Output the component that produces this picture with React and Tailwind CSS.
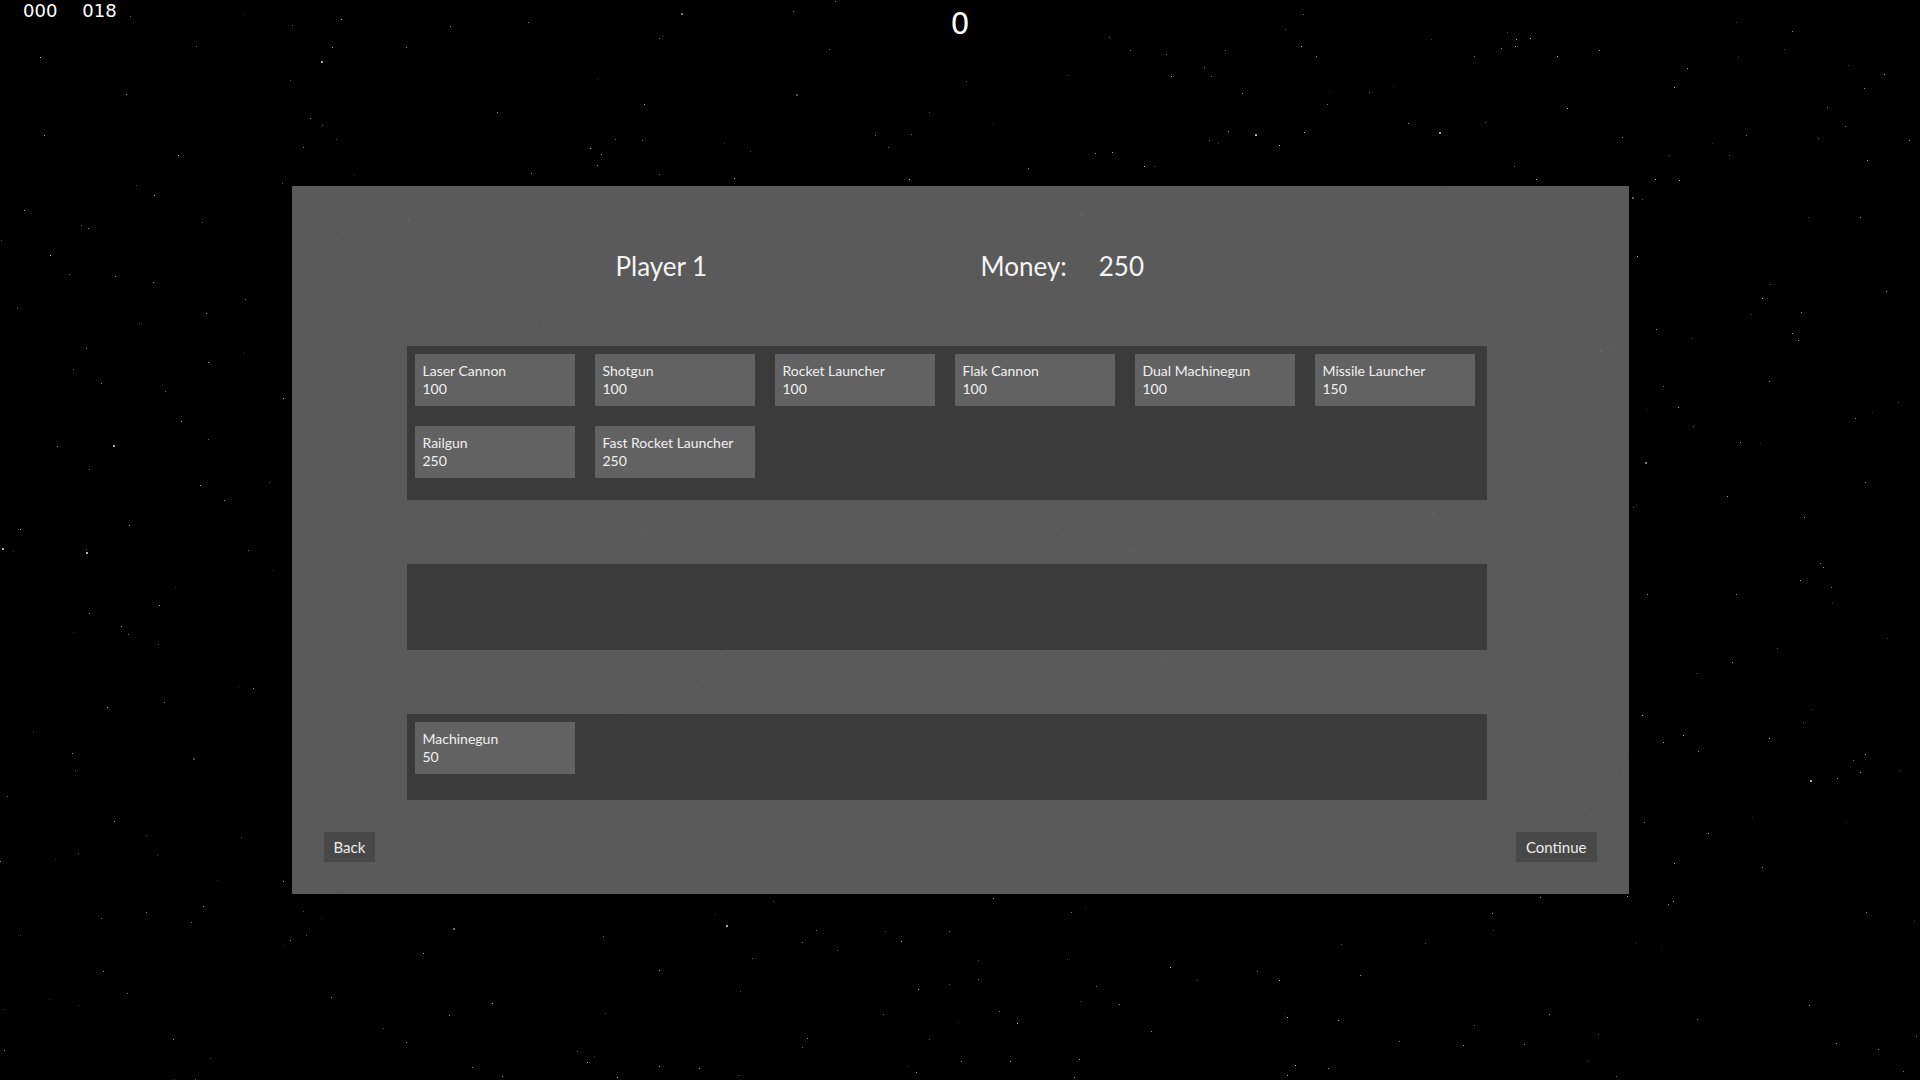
import React from 'react';

const shopItems = [
  { name: 'Laser Cannon', price: 100 },
  { name: 'Shotgun', price: 100 },
  { name: 'Rocket Launcher', price: 100 },
  { name: 'Flak Cannon', price: 100 },
  { name: 'Dual Machinegun', price: 100 },
  { name: 'Missile Launcher', price: 150 },
  { name: 'Railgun', price: 250 },
  { name: 'Fast Rocket Launcher', price: 250 },
];

const owned = [{ name: 'Machinegun', price: 50 }];

// simple seeded random so the starfield stays the same every render
const makeRandom = (seed) => () => {
  seed = (seed * 16807) % 2147483647;
  return (seed - 1) / 2147483646;
};

const rand = makeRandom(1337);
const stars = Array.from({ length: 650 }, () => ({
  x: Math.floor(rand() * 1920),
  y: Math.floor(rand() * 1080),
  s: rand() < 0.04 ? 2 : 1,
  o: 0.15 + rand() * 0.6,
}));

const Starfield = () => (
  <svg className="absolute inset-0" width="1920" height="1080" viewBox="0 0 1920 1080">
    {stars.map((st, i) => (
      <rect key={i} x={st.x} y={st.y} width={st.s} height={st.s} fill="#ffffff" opacity={st.o} />
    ))}
  </svg>
);

const ItemCard = ({ item }) => (
  <div className="w-[160px] h-[52px] bg-[#626262] pl-[8px] pt-[8px] text-[14px] leading-[18px] text-[#f0f0f0] cursor-pointer">
    <div>{item.name}</div>
    <div>{item.price}</div>
  </div>
);

const App = () => {
  return (
    <div className="relative w-full h-[1080px] bg-black overflow-hidden font-['Lato',sans-serif]">
      <Starfield />

      <div className="absolute top-0 left-[23px] flex gap-[25px] text-[18px] leading-[22px] text-white font-['DejaVu_Sans',sans-serif]">
        <span>000</span>
        <span>018</span>
      </div>
      <div className="absolute top-[6px] left-0 right-0 text-center text-[30px] leading-[36px] text-white font-['DejaVu_Sans',sans-serif]">
        0
      </div>

      <div className="relative h-full flex items-center justify-center">
        <div className="w-[1337px] h-[708px] bg-[rgba(95,95,95,0.95)] p-[32px] flex flex-col">
          <div className="pl-[83px] pr-[110px]">
            <div className="h-[97px] mb-[31px] flex items-center text-[26px] text-[#f4f4f4]">
              <div className="w-[574px] pl-[209px]">Player 1</div>
              <div className="flex gap-[32px]">
                <span>Money:</span>
                <span>250</span>
              </div>
            </div>

            <div className="h-[154px] bg-[#3b3b3b] pt-[8px] pl-[8px] pr-[12px] flex flex-wrap content-start gap-[20px]">
              {shopItems.map((item) => (
                <ItemCard key={item.name} item={item} />
              ))}
            </div>

            <div className="mt-[64px] h-[86px] bg-[#3b3b3b]" />

            <div className="mt-[64px] h-[86px] bg-[#3b3b3b] pt-[8px] pl-[8px] flex flex-wrap content-start gap-[20px]">
              {owned.map((item) => (
                <ItemCard key={item.name} item={item} />
              ))}
            </div>
          </div>

          <div className="mt-[32px] flex justify-between">
            <button className="h-[30px] px-[10px] bg-[#484848] text-[15px] text-[#ececec]">Back</button>
            <button className="h-[30px] px-[10px] bg-[#484848] text-[15px] text-[#ececec]">Continue</button>
          </div>
        </div>
      </div>
    </div>
  );
};

export default App;
